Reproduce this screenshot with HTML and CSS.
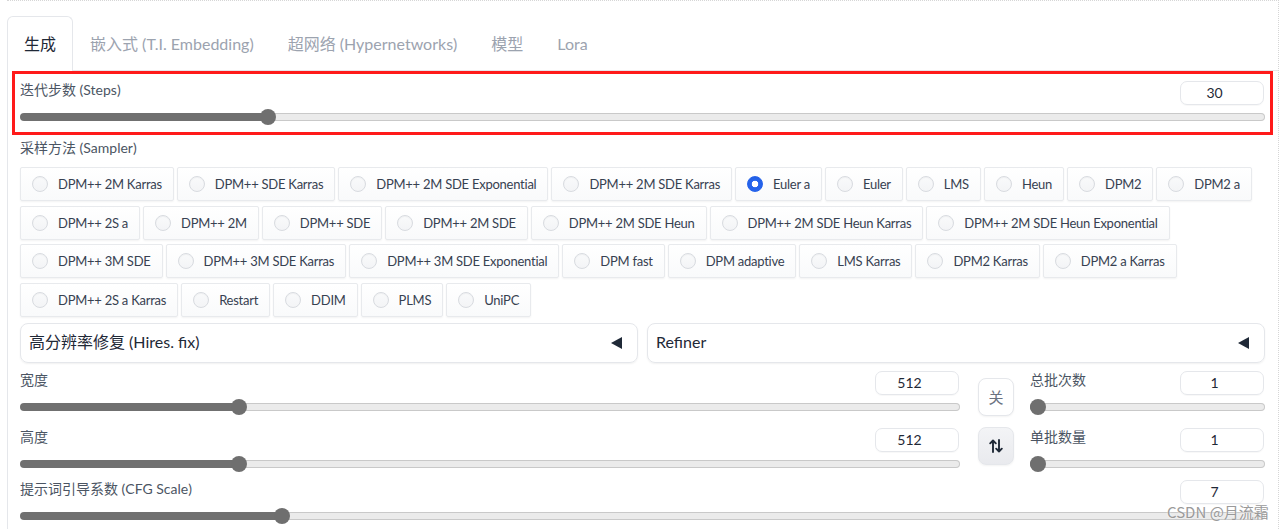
FILE: index.html
```html
<!DOCTYPE html>
<html lang="zh">
<head>
<meta charset="utf-8">
<title>txt2img</title>
<link rel="stylesheet" href="styles.css">
</head>
<body>
<div class="frame">
  <div class="tabs">
    <div class="tab active">生成</div>
    <div class="tab">嵌入式 (T.I. Embedding)</div>
    <div class="tab">超网络 (Hypernetworks)</div>
    <div class="tab">模型</div>
    <div class="tab">Lora</div>
  </div>
  <div class="panel">
    <div class="highlight">
      <div class="slider">
        <div class="slider-head"><span class="slabel">迭代步数 (Steps)</span><span class="num">30</span></div>
        <div class="track" style="--p:0.195"><div class="fill"></div><div class="thumb"></div><div class="rest"></div></div>
      </div>
    </div>

    <div class="sampler-label">采样方法 (Sampler)</div>
    <div class="radios">
      <div class="radio"><span class="dot"></span>DPM++ 2M Karras</div>
      <div class="radio"><span class="dot"></span>DPM++ SDE Karras</div>
      <div class="radio"><span class="dot"></span>DPM++ 2M SDE Exponential</div>
      <div class="radio"><span class="dot"></span>DPM++ 2M SDE Karras</div>
      <div class="radio sel"><span class="dot"></span>Euler a</div>
      <div class="radio"><span class="dot"></span>Euler</div>
      <div class="radio"><span class="dot"></span>LMS</div>
      <div class="radio"><span class="dot"></span>Heun</div>
      <div class="radio"><span class="dot"></span>DPM2</div>
      <div class="radio"><span class="dot"></span>DPM2 a</div>
      <div class="radio"><span class="dot"></span>DPM++ 2S a</div>
      <div class="radio"><span class="dot"></span>DPM++ 2M</div>
      <div class="radio"><span class="dot"></span>DPM++ SDE</div>
      <div class="radio"><span class="dot"></span>DPM++ 2M SDE</div>
      <div class="radio"><span class="dot"></span>DPM++ 2M SDE Heun</div>
      <div class="radio"><span class="dot"></span>DPM++ 2M SDE Heun Karras</div>
      <div class="radio"><span class="dot"></span>DPM++ 2M SDE Heun Exponential</div>
      <div class="radio"><span class="dot"></span>DPM++ 3M SDE</div>
      <div class="radio"><span class="dot"></span>DPM++ 3M SDE Karras</div>
      <div class="radio"><span class="dot"></span>DPM++ 3M SDE Exponential</div>
      <div class="radio"><span class="dot"></span>DPM fast</div>
      <div class="radio"><span class="dot"></span>DPM adaptive</div>
      <div class="radio"><span class="dot"></span>LMS Karras</div>
      <div class="radio"><span class="dot"></span>DPM2 Karras</div>
      <div class="radio"><span class="dot"></span>DPM2 a Karras</div>
      <div class="radio"><span class="dot"></span>DPM++ 2S a Karras</div>
      <div class="radio"><span class="dot"></span>Restart</div>
      <div class="radio"><span class="dot"></span>DDIM</div>
      <div class="radio"><span class="dot"></span>PLMS</div>
      <div class="radio"><span class="dot"></span>UniPC</div>
    </div>

    <div class="accs">
      <div class="acc"><span class="acc-title">高分辨率修复 (Hires. fix)</span><span class="tri"></span></div>
      <div class="acc"><span class="acc-title">Refiner</span><span class="tri"></span></div>
    </div>

    <div class="dims">
      <div class="col col-left">
        <div class="slider">
          <div class="slider-head"><span class="slabel">宽度</span><span class="num">512</span></div>
          <div class="track" style="--p:0.228"><div class="fill"></div><div class="thumb"></div><div class="rest"></div></div>
        </div>
        <div class="slider">
          <div class="slider-head"><span class="slabel">高度</span><span class="num">512</span></div>
          <div class="track" style="--p:0.228"><div class="fill"></div><div class="thumb"></div><div class="rest"></div></div>
        </div>
      </div>
      <div class="mid">
        <div class="tool tool-off">关</div>
        <div class="tool tool-swap">
          <svg width="14" height="16" viewBox="0 0 14 16" aria-hidden="true">
            <path d="M4 14V2.5M1.2 5.3L4 2.5l2.8 2.8" fill="none" stroke="#1f2937" stroke-width="1.9" stroke-linecap="round" stroke-linejoin="round"/>
            <path d="M10 2v11.5M7.2 10.7L10 13.5l2.8-2.8" fill="none" stroke="#1f2937" stroke-width="1.9" stroke-linecap="round" stroke-linejoin="round"/>
          </svg>
        </div>
      </div>
      <div class="col col-right">
        <div class="slider">
          <div class="slider-head"><span class="slabel">总批次数</span><span class="num">1</span></div>
          <div class="track" style="--p:0"><div class="fill"></div><div class="thumb"></div><div class="rest"></div></div>
        </div>
        <div class="slider">
          <div class="slider-head"><span class="slabel">单批数量</span><span class="num">1</span></div>
          <div class="track" style="--p:0"><div class="fill"></div><div class="thumb"></div><div class="rest"></div></div>
        </div>
      </div>
    </div>

    <div class="slider cfg">
      <div class="slider-head"><span class="slabel">提示词引导系数 (CFG Scale)</span><span class="num">7</span></div>
      <div class="track" style="--p:0.207"><div class="fill"></div><div class="thumb"></div><div class="rest"></div></div>
    </div>
  </div>
</div>
<div class="watermark">CSDN @月流霜</div>
</body>
</html>
```
FILE: styles.css
```css
* { box-sizing: border-box; }
html, body { margin: 0; padding: 0; background: #fff; }
body {
  font-family: Lato, "Noto Sans CJK SC", sans-serif;
  font-size: 14px;
  color: #374151;
  height: 529px;
  overflow: hidden;
  position: relative;
}
.frame {
  margin-left: 7px;
  width: 1272px;
  height: 529px;
  border-top: 1px dotted #d6d6d6;
  border-right: 1px dotted #d6d6d6;
  padding-top: 15px;
}
.tabs { display: flex; height: 54px; }
.tab {
  height: 55px;
  padding: 15px 16px;
  font-size: 16px;
  line-height: 24px;
  color: #9ca3af;
  border: 1px solid transparent;
  border-bottom: none;
  white-space: nowrap;
  overflow: hidden;
}
.tab.active {
  color: #1f2937;
  background: #fff;
  border-color: #e5e7eb;
  border-radius: 6px 6px 0 0;
  position: relative;
  z-index: 1;
}
.panel {
  border-top: 1px solid #e5e7eb;
  border-left: 1px solid #e5e7eb;
  padding: 0 13px 0 12px;
  height: 460px;
}
.highlight {
  margin: 0 -8px;
  border: 3px solid #ff1a1a;
  padding: 7px 5px 7px 5px;
}
.slider-head {
  display: flex;
  justify-content: space-between;
  align-items: flex-start;
  height: 24px;
}
.slabel { height: 18px; line-height: 18px; color: #4b5563; white-space: nowrap; }
.num {
  width: 84px;
  height: 24px;
  margin-right: 1px;
  padding-right: 15px;
  border: 1px solid #e5e7eb;
  border-radius: 7px;
  text-align: center;
  line-height: 22px;
  color: #1f2937;
  box-shadow: 0 1px 1px rgba(0,0,0,0.03);
}
.track {
  margin-top: 4px;
  height: 16px;
  display: flex;
  align-items: center;
}
.fill {
  flex: none;
  width: calc(var(--p) * (100% - 16px) + 8px);
  height: 8px;
  background: #707070;
  border-radius: 4px 0 0 4px;
}
.thumb {
  flex: none;
  width: 16px;
  height: 16px;
  border-radius: 50%;
  background: #6f6f6f;
  margin: 0 -8px;
  position: relative;
  z-index: 1;
}
.rest {
  flex: 1;
  height: 8px;
  background: #ebebeb;
  border: 1px solid #c9c9c9;
  border-left: none;
  border-radius: 0 4px 4px 0;
}
.sampler-label {
  margin-top: 3px;
  height: 20px;
  line-height: 20px;
  color: #4b5563;
}
.radios {
  margin-top: 9px;
  display: flex;
  flex-wrap: wrap;
  gap: 4.5px 3px;
  padding-right: 10px;
}
.radio {
  display: flex;
  align-items: center;
  gap: 10px;
  height: 34px;
  padding: 0 11px;
  border: 1px solid #e8eaed;
  border-radius: 2px;
  background: linear-gradient(#ffffff, #f9fafb);
  box-shadow: 0 1px 2px rgba(0,0,0,0.05);
  color: #374151;
  font-size: 13px;
  letter-spacing: -0.25px;
  white-space: nowrap;
}
.dot {
  flex: none;
  width: 16px;
  height: 16px;
  border-radius: 50%;
  border: 1px solid #d8dbe0;
  background: linear-gradient(#f9fafb, #f3f4f6);
  box-shadow: inset 0 1px 1px rgba(0,0,0,0.04);
}
.radio.sel .dot {
  border-color: #2563eb;
  background: radial-gradient(circle, #fff 0 3px, #2563eb 3.6px);
}
.accs {
  margin-top: 6px;
  display: flex;
  gap: 9px;
}
.acc {
  flex: 1;
  height: 40px;
  border: 1px solid #e5e7eb;
  border-radius: 8px;
  box-shadow: 0 1px 2px rgba(0,0,0,0.06);
  display: flex;
  align-items: center;
  justify-content: space-between;
  padding: 0 15px 0 8px;
  font-size: 16px;
  color: #1f2937;
}
.acc-title { height: 22px; line-height: 22px; margin-top: -2px; white-space: nowrap; }
.tri {
  width: 0;
  height: 0;
  border-top: 6px solid transparent;
  border-bottom: 6px solid transparent;
  border-right: 11px solid #1f2937;
}
.dims {
  margin-top: 8px;
  display: flex;
}
.col { display: flex; flex-direction: column; gap: 13px; }
.col-left { flex: 1; }
.col-right { width: 235px; }
.mid {
  width: 36px;
  margin: 0 16px 0 18px;
  display: flex;
  flex-direction: column;
  justify-content: center;
  gap: 11px;
}
.tool {
  height: 38px;
  border: 1px solid #e5e7eb;
  border-radius: 8px;
  display: flex;
  align-items: center;
  justify-content: center;
  box-shadow: 0 1px 2px rgba(0,0,0,0.05);
}
.tool-off { background: #fff; color: #6b7280; font-size: 15px; }
.tool-swap { background: linear-gradient(#f3f4f6, #e9eaee); }
.cfg { margin-top: 8px; }
.watermark {
  position: absolute;
  left: 1167px;
  top: 502px;
  font-family: "Noto Sans CJK SC", sans-serif;
  font-size: 15px;
  line-height: 20px;
  color: #9a9a9a;
  text-shadow: 0 0 2px #fff;
}
```
